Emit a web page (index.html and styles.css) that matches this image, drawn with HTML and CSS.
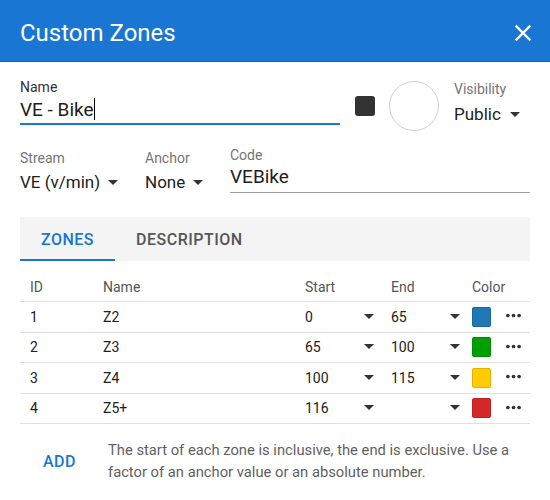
FILE: index.html
```html
<!DOCTYPE html>
<html>
<head>
<meta charset="utf-8">
<link rel="stylesheet" href="styles.css">
</head>
<body>
<div class="header">
  <h1 class="title">Custom Zones</h1>
  <svg class="close" viewBox="0 0 24 24" width="28" height="28"><path fill="#fff" d="M19 6.41L17.590 5 12 10.59 6.41 5 5 6.41 10.59 12 5 17.59 6.41 19 12 13.41 17.59 19 19 17.59 13.41 12z"/></svg>
</div>
<div class="content">
  <div class="row1">
    <div class="name-field">
      <div class="label label-dark">Name</div>
      <div class="name-input">VE - Bike<span class="caret"></span></div>
    </div>
    <div class="swatch-dark"></div>
    <div class="circle"></div>
    <div class="visibility">
      <div class="label">Visibility</div>
      <div class="select"><span>Public</span><span class="arrow"></span></div>
    </div>
  </div>
  <div class="row2">
    <div class="stream">
      <div class="label">Stream</div>
      <div class="select"><span>VE (v/min)</span><span class="arrow"></span></div>
    </div>
    <div class="anchor">
      <div class="label">Anchor</div>
      <div class="select"><span>None</span><span class="arrow"></span></div>
    </div>
    <div class="code">
      <div class="label">Code</div>
      <div class="code-input">VEBike</div>
    </div>
  </div>
  <div class="tabs">
    <div class="tab tab-active">Zones</div>
    <div class="tab">Description</div>
  </div>
  <div class="table">
    <div class="trow thead">
      <div class="c-id">ID</div><div>Name</div><div>Start</div><div>End</div><div>Color</div>
    </div>
    <div class="trow">
      <div class="c-id">1</div><div>Z2</div>
      <div class="cell-select"><span>0</span><span class="arrow"></span></div>
      <div class="cell-select"><span>65</span><span class="arrow"></span></div>
      <div class="color-cell"><span class="swatch sw-blue"></span><svg class="dots" viewBox="0 0 15 5" width="15" height="5"><circle cx="1.9" cy="2.5" r="1.85"/><circle cx="7.5" cy="2.5" r="1.85"/><circle cx="13.1" cy="2.5" r="1.85"/></svg></div>
    </div>
    <div class="trow">
      <div class="c-id">2</div><div>Z3</div>
      <div class="cell-select"><span>65</span><span class="arrow"></span></div>
      <div class="cell-select"><span>100</span><span class="arrow"></span></div>
      <div class="color-cell"><span class="swatch sw-green"></span><svg class="dots" viewBox="0 0 15 5" width="15" height="5"><circle cx="1.9" cy="2.5" r="1.85"/><circle cx="7.5" cy="2.5" r="1.85"/><circle cx="13.1" cy="2.5" r="1.85"/></svg></div>
    </div>
    <div class="trow">
      <div class="c-id">3</div><div>Z4</div>
      <div class="cell-select"><span>100</span><span class="arrow"></span></div>
      <div class="cell-select"><span>115</span><span class="arrow"></span></div>
      <div class="color-cell"><span class="swatch sw-yellow"></span><svg class="dots" viewBox="0 0 15 5" width="15" height="5"><circle cx="1.9" cy="2.5" r="1.85"/><circle cx="7.5" cy="2.5" r="1.85"/><circle cx="13.1" cy="2.5" r="1.85"/></svg></div>
    </div>
    <div class="trow">
      <div class="c-id">4</div><div>Z5+</div>
      <div class="cell-select"><span>116</span><span class="arrow"></span></div>
      <div class="cell-select"><span></span><span class="arrow"></span></div>
      <div class="color-cell"><span class="swatch sw-red"></span><svg class="dots" viewBox="0 0 15 5" width="15" height="5"><circle cx="1.9" cy="2.5" r="1.85"/><circle cx="7.5" cy="2.5" r="1.85"/><circle cx="13.1" cy="2.5" r="1.85"/></svg></div>
    </div>
  </div>
  <div class="footer">
    <div class="add">ADD</div>
    <div class="note">The start of each zone is inclusive, the end is exclusive. Use a factor of an anchor value or an absolute number.</div>
  </div>
</div>
</body>
</html>
```
FILE: styles.css
```css
html, body {
  margin: 0;
  padding: 0;
  background: #fff;
}
body {
  font-family: Roboto, "Liberation Sans", Arial, sans-serif;
  color: #212121;
  width: 550px;
  height: 500px;
  overflow: hidden;
}
.header {
  height: 62px;
  box-sizing: border-box;
  background: #1976d2;
  border-bottom: 1px solid #1565c0;
  display: flex;
  justify-content: space-between;
  align-items: flex-start;
  padding: 0 13px 0 20px;
}
.title {
  margin: 19px 0 0 0;
  font-size: 24px;
  line-height: 28px;
  font-weight: 400;
  color: #fff;
}
.close {
  margin-top: 19px;
  display: block;
}
.content {
  padding: 0 20px;
}
.label {
  font-size: 14px;
  line-height: 15px;
  color: #757575;
}
.label-dark {
  color: #333;
}
.row1 {
  margin-top: 18px;
  display: flex;
  align-items: flex-start;
}
.name-field {
  width: 320px;
}
.name-input {
  margin-top: 2px;
  font-size: 19px;
  line-height: 26px;
  color: #212121;
  border-bottom: 2px solid #1976d2;
}
.caret {
  display: inline-block;
  width: 1px;
  height: 22px;
  background: #000;
  vertical-align: -4px;
}
.swatch-dark {
  width: 20px;
  height: 20px;
  margin: 16px 0 0 15px;
  background: #333;
  border-radius: 3px;
}
.circle {
  width: 48px;
  height: 48px;
  margin: 1px 0 0 14px;
  border: 1px solid #d0d0d0;
  border-radius: 50%;
}
.visibility {
  margin: 2px 0 0 15px;
}
.select {
  margin-top: 5px;
  font-size: 17px;
  line-height: 24px;
  color: #212121;
  display: flex;
  align-items: center;
}
.arrow {
  width: 0;
  height: 0;
  border-left: 5px solid transparent;
  border-right: 5px solid transparent;
  border-top: 5px solid #333;
  margin-left: 9px;
}
.row2 {
  margin-top: 17px;
  display: flex;
  align-items: flex-start;
}
.stream {
  width: 125px;
  margin-top: 3px;
}
.stream .select, .anchor .select {
  margin-top: 4px;
}
.stream .arrow, .anchor .arrow {
  margin-left: 8px;
}
.anchor {
  width: 85px;
  margin-top: 3px;
}
.code {
  flex: 1;
}
.code-input {
  font-size: 19px;
  line-height: 27px;
  padding-bottom: 2px;
  border-bottom: 1px solid #9e9e9e;
  color: #212121;
}
.tabs {
  margin-top: 23px;
  height: 44px;
  background: #f4f4f4;
  display: flex;
}
.tab {
  height: 44px;
  box-sizing: border-box;
  padding: 0 21px;
  display: flex;
  align-items: center;
  font-size: 16px;
  font-weight: 500;
  letter-spacing: 0.5px;
  text-transform: uppercase;
  color: #555;
}
.tab-active {
  color: #1976d2;
  box-shadow: inset 0 -2px 0 #1976d2;
}
.table {
  margin-top: 12px;
}
.trow {
  display: grid;
  grid-template-columns: 83px 202px 86px 81px 58px;
  height: 30.5px;
  box-sizing: border-box;
  align-items: center;
  border-bottom: 1px solid #e0e0e0;
  font-size: 14px;
  line-height: 16px;
  color: #212121;
}
.thead {
  height: 29px;
  color: #555;
  padding-bottom: 1px;
}
.c-id {
  padding-left: 10px;
}
.cell-select {
  width: 73px;
  box-sizing: border-box;
  padding-right: 4px;
  display: flex;
  justify-content: space-between;
  align-items: center;
}
.cell-select .arrow {
  margin-top: -1px;
}
.color-cell {
  display: flex;
  align-items: center;
}
.swatch {
  width: 19px;
  height: 20px;
  box-sizing: border-box;
  border-radius: 2px;
  border: 1px solid rgba(0, 0, 0, 0.12);
}
.sw-blue { background: #1f77b4; }
.sw-green { background: #00a000; }
.sw-yellow { background: #ffcc00; }
.sw-red { background: #d62728; }
.dots {
  margin-left: 15px;
  margin-top: -2px;
  fill: #333;
  display: block;
}
.footer {
  margin-top: 15px;
  display: flex;
  align-items: center;
}
.add {
  flex: 0 0 88px;
  box-sizing: border-box;
  padding-left: 23px;
  font-size: 16px;
  font-weight: 500;
  letter-spacing: 0.5px;
  color: #1976d2;
}
.note {
  width: 422px;
  font-size: 14.75px;
  line-height: 22px;
  color: #5f5f5f;
}
```
